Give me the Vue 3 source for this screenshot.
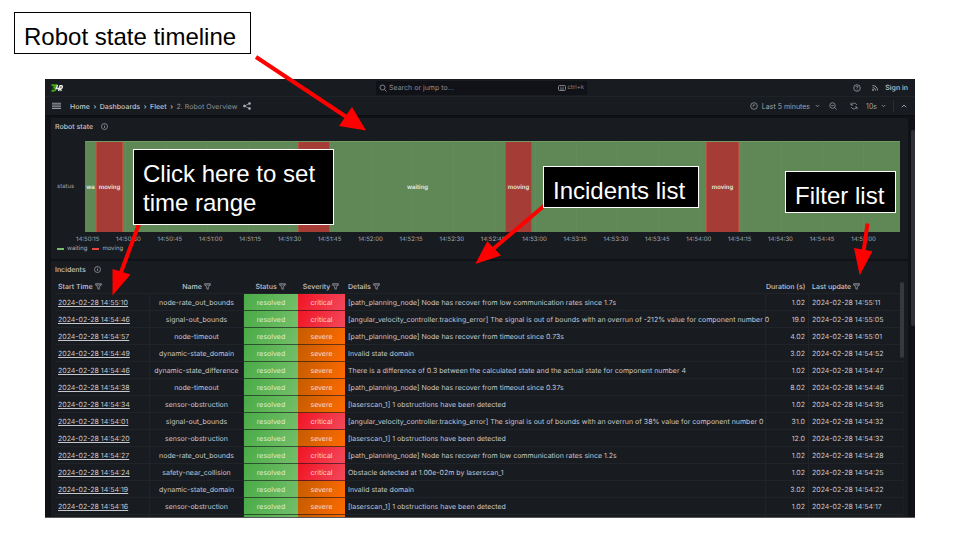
<script setup>
import { ref } from 'vue'

const query = ref('')

const segments = [
  { state: 'waiting', span: 11, label: 'wa' },
  { state: 'moving', span: 27, label: 'moving' },
  { state: 'waiting', span: 175, label: '' },
  { state: 'moving', span: 32, label: '' },
  { state: 'waiting', span: 175, label: 'waiting' },
  { state: 'moving', span: 27, label: 'moving' },
  { state: 'waiting', span: 174, label: '' },
  { state: 'moving', span: 33, label: 'moving' },
  { state: 'waiting', span: 161, label: '' },
]

const ticks = Array.from({ length: 20 }, (_, i) => {
  const s = 15 + i * 15
  const mm = String(50 + Math.floor(s / 60)).padStart(2, '0')
  return `14:${mm}:${String(s % 60).padStart(2, '0')}`
})

const columns = [
  { key: 'start', label: 'Start Time', filter: true },
  { key: 'name', label: 'Name', filter: true },
  { key: 'status', label: 'Status', filter: true },
  { key: 'severity', label: 'Severity', filter: true },
  { key: 'details', label: 'Details', filter: true },
  { key: 'duration', label: 'Duration (s)', filter: false },
  { key: 'update', label: 'Last update', filter: true },
]

const incidents = [
  ['14:55:10', 'node-rate_out_bounds', 'critical', '[path_planning_node] Node has recover from low communication rates since 1.7s', '1.02', '14:55:11'],
  ['14:54:46', 'signal-out_bounds', 'critical', '[angular_velocity_controller.tracking_error] The signal is out of bounds with an overrun of -212% value for component number 0', '19.0', '14:55:05'],
  ['14:54:57', 'node-timeout', 'severe', '[path_planning_node] Node has recover from timeout since 0.73s', '4.02', '14:55:01'],
  ['14:54:49', 'dynamic-state_domain', 'severe', 'Invalid state domain', '3.02', '14:54:52'],
  ['14:54:46', 'dynamic-state_difference', 'severe', 'There is a difference of 0.3 between the calculated state and the actual state for component number 4', '1.02', '14:54:47'],
  ['14:54:38', 'node-timeout', 'severe', '[path_planning_node] Node has recover from timeout since 0.37s', '8.02', '14:54:46'],
  ['14:54:34', 'sensor-obstruction', 'severe', '[laserscan_1] 1 obstructions have been detected', '1.02', '14:54:35'],
  ['14:54:01', 'signal-out_bounds', 'critical', '[angular_velocity_controller.tracking_error] The signal is out of bounds with an overrun of 38% value for component number 0', '31.0', '14:54:32'],
  ['14:54:20', 'sensor-obstruction', 'severe', '[laserscan_1] 1 obstructions have been detected', '12.0', '14:54:32'],
  ['14:54:27', 'node-rate_out_bounds', 'critical', '[path_planning_node] Node has recover from low communication rates since 1.2s', '1.02', '14:54:28'],
  ['14:54:24', 'safety-near_collision', 'critical', 'Obstacle detected at 1.00e-02m by laserscan_1', '1.02', '14:54:25'],
  ['14:54:19', 'dynamic-state_domain', 'severe', 'Invalid state domain', '3.02', '14:54:22'],
  ['14:54:16', 'sensor-obstruction', 'severe', '[laserscan_1] 1 obstructions have been detected', '1.02', '14:54:17'],
]
</script>

<template>
  <div class="slide">
    <main class="dashboard">
      <header class="topbar">
        <a class="logo" href="#" aria-label="Home">
          <svg width="12" height="8" viewBox="0 0 24 16">
            <path d="M1 2.500h9L6.500 7c4 0 4 6-1 6.500H1" fill="none" stroke="#3fae16" stroke-width="3.600" />
            <path d="M13 2l-2.500 7h6M15 14l3-10.500h3.500c2 .5 1.500 5.500-1.500 5.500h-3l4 4.500" fill="none" stroke="#e4e4e4" stroke-width="3" />
          </svg>
        </a>
        <label class="search">
          <svg class="ico" width="8" height="8" viewBox="0 0 16 16"><circle cx="7" cy="7" r="5" /><path d="M11 11l4 4" /></svg>
          <input v-model="query" type="text" placeholder="Search or jump to..." aria-label="Search or jump to" />
          <svg class="ico" width="8" height="6" viewBox="0 0 16 12"><rect x="1" y="1" width="14" height="10" rx="2" /><path d="M4 4.500h1.500M7.200 4.500h1.500M10.500 4.500h1.500M4 8h8" /></svg>
          <span class="kbd">ctrl+k</span>
        </label>
        <div class="account">
          <button class="icon-btn" aria-label="Help">
            <svg class="ico" width="8" height="8" viewBox="0 0 16 16"><circle cx="8" cy="8" r="6.600" /><path d="M6 6.500c0-3 4-3 4-.5 0 1.500-2 1.500-2 3M8 11v1.500" /></svg>
          </button>
          <button class="icon-btn" aria-label="News">
            <svg class="ico bold" width="8" height="8" viewBox="0 0 16 16"><path d="M3 3c6 0 10 4 10 10M3 7.500c4 0 6 2 6 5.500" /><circle cx="4" cy="12" r="1.200" /></svg>
          </button>
          <a class="signin" href="#">Sign in</a>
        </div>
      </header>

      <nav class="navbar">
        <button class="icon-btn menu" aria-label="Menu">
          <svg class="ico bold" width="9" height="8" viewBox="0 0 18 16"><path d="M0 2.500h18M0 6h18M0 9.500h18M0 13h18" /></svg>
        </button>
        <div class="crumbs">
          <a href="#">Home</a><span class="sep">›</span>
          <a href="#">Dashboards</a><span class="sep">›</span>
          <a href="#">Fleet</a><span class="sep">›</span>
          <span class="current">2. Robot Overview</span>
        </div>
        <button class="icon-btn share" aria-label="Share">
          <svg class="ico solid" width="8" height="8" viewBox="0 0 16 16"><path d="M13 3L3 8l10 5" /><circle cx="13" cy="3" r="2.200" /><circle cx="3" cy="8" r="2.200" /><circle cx="13" cy="13" r="2.200" /></svg>
        </button>
        <div class="tools">
          <button class="range">
            <svg class="ico" width="8" height="8" viewBox="0 0 16 16"><circle cx="8" cy="8" r="6.600" /><path d="M8 4v4H5" /></svg>
            <span>Last 5 minutes</span>
            <svg class="ico chev" width="5" height="4" viewBox="0 0 10 8"><path d="M1.500 2L5 5.500 8.500 2" /></svg>
          </button>
          <button class="icon-btn" aria-label="Zoom out">
            <svg class="ico" width="8" height="8" viewBox="0 0 16 16"><circle cx="7" cy="7" r="5.500" /><path d="M11 11l4 4M4.500 7h5" /></svg>
          </button>
          <button class="icon-btn refresh" aria-label="Refresh">
            <svg class="ico" width="8" height="8" viewBox="0 0 16 16"><path d="M2 1.500V6h4M2.500 5.500C5 1 11.500 1 13.500 6M14 14.500V10h-4M13.500 10.500C11 15 4.500 15 2.500 10" /></svg>
          </button>
          <button class="rate">
            <span>10s</span>
            <svg class="ico" width="5" height="4" viewBox="0 0 10 8"><path d="M1.500 2L5 5.500 8.500 2" /></svg>
          </button>
          <button class="icon-btn collapse" aria-label="Collapse">
            <svg class="ico bold" width="6" height="4" viewBox="0 0 12 8"><path d="M1.500 6.500L6 2l4.500 4.500" /></svg>
          </button>
        </div>
      </nav>

      <div class="canvas">
        <div class="panels">
          <section class="panel">
            <h2 class="title">
              Robot state
              <svg class="ico" width="7" height="7" viewBox="0 0 14 14"><circle cx="7" cy="7" r="6" /><path d="M7 6v4M7 3.500v1.500" /></svg>
            </h2>
            <div class="chart">
              <span class="series">status</span>
              <div class="plot">
                <div
                  v-for="(s, i) in segments"
                  :key="i"
                  class="segment"
                  :class="s.state"
                  :style="{ flexGrow: s.span }"
                >{{ s.label }}</div>
              </div>
            </div>
            <div class="axis"><span v-for="t in ticks" :key="t">{{ t }}</span></div>
            <div class="legend">
              <span class="key waiting">waiting</span>
              <span class="key moving">moving</span>
            </div>
          </section>

          <section class="panel incidents">
            <h2 class="title">
              Incidents
              <svg class="ico" width="7" height="7" viewBox="0 0 14 14"><circle cx="7" cy="7" r="6" /><path d="M7 6v4M7 3.500v1.500" /></svg>
            </h2>
            <table>
              <colgroup>
                <col v-for="c in columns" :key="c.key" :class="'w-' + c.key" />
              </colgroup>
              <thead>
                <tr>
                  <th v-for="c in columns" :key="c.key" :class="c.key">
                    {{ c.label }}
                    <button v-if="c.filter" class="filter" :aria-label="'Filter ' + c.label">
                      <svg class="ico" width="7" height="7" viewBox="0 0 14 14"><path d="M1 1.500h12v2L8.500 8v4.500l-3-1V8L1 3.500zM1.500 4h11" /></svg>
                    </button>
                  </th>
                </tr>
              </thead>
              <tbody>
                <tr v-for="(r, i) in incidents" :key="i">
                  <td class="start"><a href="#">2024-02-28 {{ r[0] }}</a></td>
                  <td class="name">{{ r[1] }}</td>
                  <td class="status resolved">resolved</td>
                  <td class="severity" :class="r[2]">{{ r[2] }}</td>
                  <td class="details">{{ r[3] }}</td>
                  <td class="duration">{{ r[4] }}</td>
                  <td class="update">2024-02-28 {{ r[5] }}</td>
                </tr>
                <tr>
                  <td></td><td></td><td class="resolved"></td><td class="severe"></td><td></td><td></td><td></td>
                </tr>
              </tbody>
            </table>
            <div class="table-thumb"></div>
          </section>
        </div>
        <div class="scroll"><div class="thumb"></div></div>
      </div>
    </main>

    <svg class="arrows" width="960" height="540" viewBox="0 0 960 540" aria-hidden="true">
      <g stroke="#f00" stroke-width="4">
        <path d="M256 57L348 118M139 224L120 275M545 205L492 250M867.500 223.500L863.500 252" />
      </g>
      <g fill="#f00">
        <path d="M366 130.500L339 126L352 107z" />
        <path d="M112.500 295.500L112.500 269L130.500 274.500z" />
        <path d="M475.300 264L487.300 241.300L501 255.500z" />
        <path d="M859.700 275.300L854 248L872.500 251.300z" />
      </g>
    </svg>

    <div class="callout light timeline">Robot state timeline</div>
    <div class="callout time">Click here to set<br />time range</div>
    <div class="callout list">Incidents list</div>
    <div class="callout filters">Filter list</div>
  </div>
</template>

<style>
body {
  background: #fff;
}
</style>

<style scoped>
* {
  box-sizing: border-box;
}

.slide {
  position: relative;
  height: 100vh;
  padding: 79px 45px 22px;
  overflow: hidden;
  background: #fff;
}

.dashboard {
  display: flex;
  flex-direction: column;
  height: 100%;
  overflow: hidden;
  border-bottom: 1px solid #55575b;
  background: #111217;
  color: #c6c7cf;
  font: 7px/9px Inter, "Liberation Sans", sans-serif;
  text-rendering: geometricPrecision;
}

a {
  color: inherit;
  text-decoration: none;
}

button {
  display: flex;
  align-items: center;
  padding: 0;
  border: 0;
  background: none;
  color: inherit;
  font: inherit;
}

.ico {
  flex: none;
  fill: none;
  stroke: #9a9ba4;
  stroke-width: 1.6;
}

.ico.bold {
  stroke-width: 2;
}

.ico.solid circle {
  fill: #b9bac4;
}

.topbar {
  display: grid;
  grid-template-columns: 1fr 211px 1fr;
  align-items: center;
  height: 18px;
  padding: 0 7px 0 10px;
  border-bottom: 1px solid #1f2226;
  background: #181b1f;
}

.logo {
  display: flex;
  margin-left: -4px;
}

.search {
  display: flex;
  align-items: center;
  gap: 2px;
  height: 14px;
  padding: 0 3px;
  background: #111217;
  color: #85868f;
}

.search input {
  flex: 1;
  min-width: 0;
  padding: 0;
  border: 0;
  outline: 0;
  background: none;
  color: inherit;
  font: inherit;
  text-rendering: inherit;
}

.search input::placeholder {
  color: #8e8f98;
  opacity: 1;
}

.kbd {
  font-size: 6px;
}

.account {
  display: flex;
  justify-content: flex-end;
  align-items: center;
  gap: 10px;
}

.signin {
  margin-left: -4px;
  font-weight: 500;
}

.navbar {
  display: flex;
  align-items: center;
  height: 19px;
  padding: 0 8px 0 7px;
  border-bottom: 1px solid #0d0e12;
  background: #181b1f;
}

.crumbs {
  display: flex;
  margin-left: 9px;
  font-weight: 500;
}

.sep {
  width: 10px;
  text-align: center;
}

.current {
  color: #8e8f98;
  font-weight: 400;
}

.share {
  margin-left: 6px;
}

.tools {
  display: flex;
  align-items: center;
  margin-left: auto;
  color: #a0a1aa;
}

.range {
  gap: 4px;
  margin-right: 9px;
}

.chev {
  margin-left: 1px;
}

.refresh {
  margin: 0 8px 0 13px;
}

.rate {
  gap: 4px;
}

.collapse {
  height: 12px;
  margin-left: 7px;
  padding-left: 7px;
  border-left: 1px solid #2a2d32;
}

.canvas {
  display: flex;
  flex: 1;
  min-height: 0;
  padding-top: 2px;
}

.panels {
  display: flex;
  flex: 1;
  flex-direction: column;
  gap: 2px;
  min-width: 0;
  padding: 0 3px 0 6px;
}

.panel {
  position: relative;
  flex: none;
  border-radius: 1px;
  background: #181b1f;
}

.incidents {
  flex: 1;
  min-height: 0;
  overflow: hidden;
  padding: 0 4px;
}

.title {
  display: flex;
  align-items: center;
  gap: 8px;
  height: 16px;
  margin: 0;
  padding-left: 4px;
  font-size: 7px;
  font-weight: 500;
}

.incidents .title {
  height: 18px;
  padding: 0 0 2px;
}

.chart {
  display: flex;
  align-items: center;
  padding: 7px 8px 0 6px;
}

.series {
  width: 28px;
  color: #9a9ba3;
  font-size: 6px;
}

.plot {
  position: relative;
  display: flex;
  flex: 1;
  height: 91px;
  border-top: 1px solid #6f9b64;
}

.plot::after {
  content: "";
  position: absolute;
  inset: 0;
  background: repeating-linear-gradient(to right, transparent 0 40px, rgba(255, 255, 255, 0.03) 40px 41px);
}

.segment {
  display: flex;
  flex: 1 1 0;
  align-items: center;
  justify-content: center;
  min-width: 0;
  color: #e4ebe2;
  font-size: 6px;
  font-weight: 600;
}

.segment.waiting {
  background: #5f8856;
}

.segment.moving {
  box-shadow: inset 1px 0 #b8503d, inset -1px 0 #b8503d;
  background: #a63c36;
}

.axis {
  display: flex;
  justify-content: space-between;
  padding: 3px 32px 0 25px;
  color: #adaeb6;
  font-size: 6px;
}

.legend {
  display: flex;
  gap: 5px;
  padding: 0 6px 6px;
  color: #adaeb6;
  font-size: 6px;
}

.key {
  display: flex;
  align-items: center;
  gap: 3px;
}

.key::before {
  content: "";
  width: 7px;
  height: 2px;
  background: #73bf69;
}

.key.moving::before {
  background: #e8453c;
}

table {
  width: 100%;
  border-collapse: separate;
  border-spacing: 0;
  table-layout: fixed;
}

.w-start,
.w-update {
  width: 95px;
}

.w-name {
  width: 94px;
}

.w-status {
  width: 54px;
}

.w-severity {
  width: 47px;
}

.w-duration {
  width: 43px;
}

th,
td {
  height: 17px;
  padding: 0 3px;
  border: solid #202328;
  border-width: 0 1px 1px 0;
  text-align: left;
  white-space: nowrap;
}

th {
  height: 15px;
  border-right-color: transparent;
  font-weight: 500;
}

th.duration {
  padding-left: 0;
}

th:last-child,
td:last-child {
  border-right-color: #1b1e22;
}

td.details {
  padding-right: 0;
}

.name,
.status,
.severity {
  text-align: center;
}

.duration {
  text-align: right;
}

.start a {
  text-decoration: underline;
  text-underline-offset: 1px;
}

.filter {
  display: inline-flex;
  vertical-align: -1px;
}

td.resolved,
td.critical,
td.severe {
  border-right: 0;
  border-bottom: 1px solid rgba(17, 18, 23, 0.6);
  color: #dcefd9;
}

td.resolved {
  background: linear-gradient(120deg, #4aab47, #73bf69);
}

td.critical {
  background: linear-gradient(120deg, #f01424, #f2495c);
  color: #fbd5d8;
}

td.severe {
  background: linear-gradient(120deg, #c45c00, #ff6a00);
  color: #fbdcc2;
}

.table-thumb {
  position: absolute;
  top: 21px;
  right: 4px;
  width: 4px;
  height: 76px;
  border-radius: 2px;
  background: #36393e;
}

.scroll {
  width: 4px;
  padding-top: 12px;
}

.thumb {
  width: 4px;
  height: 196px;
  border-radius: 2px;
  background: #2f3136;
}

.arrows {
  position: absolute;
  top: 0;
  left: 0;
}

.callout {
  position: absolute;
  padding: 10px 13px 2px 9px;
  border: 1px solid #fff;
  background: #000;
  color: #fff;
  font: 24px/28px "Liberation Sans", Arial, sans-serif;
  white-space: nowrap;
}

.callout.light {
  padding-right: 14px;
  border-color: #000;
  background: #fff;
  color: #000;
}

.timeline {
  top: 12px;
  left: 14px;
}

.time {
  top: 149px;
  left: 133px;
  padding: 9px 18px 7px 9px;
  line-height: 29px;
}

.list {
  top: 166px;
  left: 543px;
}

.filters {
  top: 171px;
  left: 785px;
  padding-right: 11px;
}
</style>
